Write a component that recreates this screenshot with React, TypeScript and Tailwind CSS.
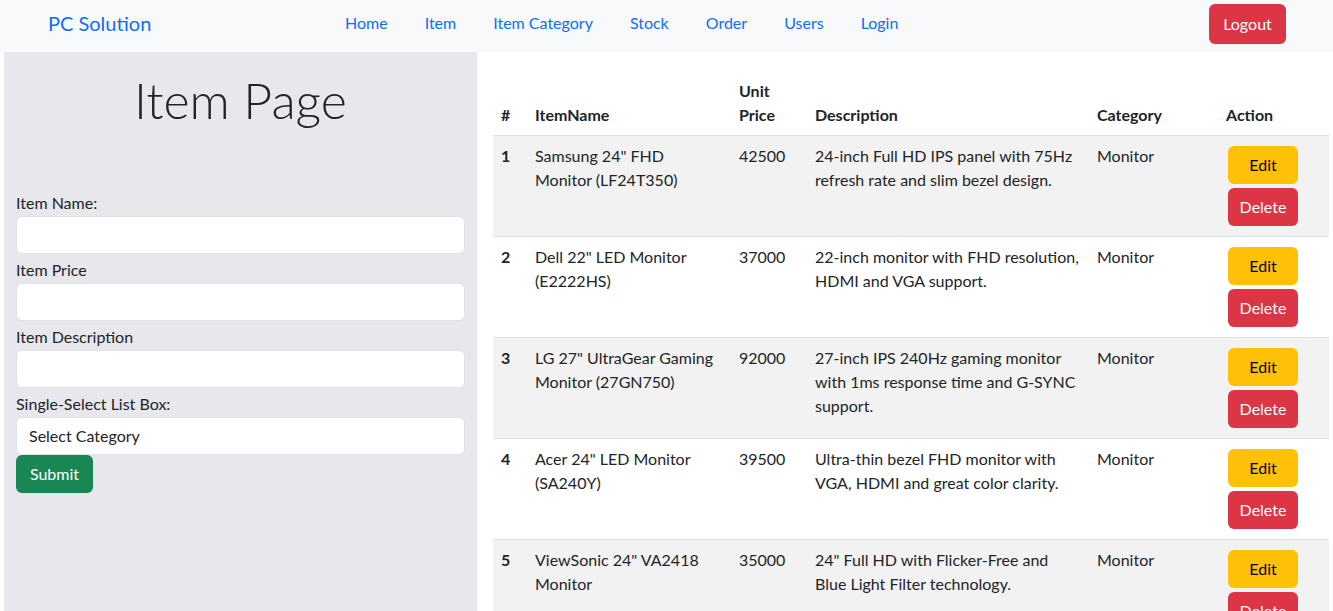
import React from 'react';

type Item = {
    id: number;
    name: string[];
    price: string;
    desc: string[];
    category: string;
};

const items: Item[] = [
    { id: 1, name: ['Samsung 24" FHD', 'Monitor (LF24T350)'], price: '42500', desc: ['24-inch Full HD IPS panel with 75Hz', 'refresh rate and slim bezel design.'], category: 'Monitor' },
    { id: 2, name: ['Dell 22" LED Monitor', '(E2222HS)'], price: '37000', desc: ['22-inch monitor with FHD resolution,', 'HDMI and VGA support.'], category: 'Monitor' },
    { id: 3, name: ['LG 27" UltraGear Gaming', 'Monitor (27GN750)'], price: '92000', desc: ['27-inch IPS 240Hz gaming monitor', 'with 1ms response time and G-SYNC', 'support.'], category: 'Monitor' },
    { id: 4, name: ['Acer 24" LED Monitor', '(SA240Y)'], price: '39500', desc: ['Ultra-thin bezel FHD monitor with', 'VGA, HDMI and great color clarity.'], category: 'Monitor' },
    { id: 5, name: ['ViewSonic 24" VA2418', 'Monitor'], price: '35000', desc: ['24" Full HD with Flicker-Free and', 'Blue Light Filter technology.'], category: 'Monitor' },
];

const navLinks = ['Home', 'Item', 'Item Category', 'Stock', 'Order', 'Users', 'Login'];

const Lines = ({ lines }: { lines: string[] }) => (
    <>
        {lines.map((l, i) => (
            <div key={i} className="whitespace-nowrap">{l}</div>
        ))}
    </>
);

const Field = ({ label, children }: { label: string; children: React.ReactNode }) => (
    <div className="mb-[4px]">
        <label className="block leading-6 text-[#212529]">{label}</label>
        <div className="mt-px">{children}</div>
    </div>
);

export default function App(): React.ReactElement {
    return (
        <div className="min-h-screen bg-white text-[16px] text-[#212529]" style={{ fontFamily: 'Lato, "Noto Sans", sans-serif' }}>
            {/* Navbar */}
            <nav className="h-[52px] bg-[#f8f9fa] flex items-center">
                <a className="w-[345px] shrink-0 pl-12 text-[20px] text-[#0d6efd] leading-none -mt-[6px]">PC Solution</a>
                <ul className="flex gap-[37px] -mt-[6px]">
                    {navLinks.map(l => (
                        <li key={l}><a className="text-[#0d6efd] leading-6">{l}</a></li>
                    ))}
                </ul>
                <button className="ml-auto mr-[47px] -mt-[4px] h-[40px] w-[77px] rounded-md bg-[#dc3545] text-white">Logout</button>
            </nav>

            <div className="flex items-stretch pl-1 pr-1">
                {/* Left form panel */}
                <aside className="w-[473px] shrink-0 bg-[#e8e7ec] px-3 pt-[19px]">
                    <h1 className="h-[58px] leading-[58px] text-center text-[50px] font-light text-[#212529]">Item Page</h1>
                    <form className="mt-[62px]" onSubmit={e => e.preventDefault()}>
                        <Field label="Item Name:">
                            <input className="block w-full h-[38px] rounded-md bg-white border border-[#dee2e6] px-3" />
                        </Field>
                        <Field label="Item Price">
                            <input className="block w-full h-[38px] rounded-md bg-white border border-[#dee2e6] px-3" />
                        </Field>
                        <Field label="Item Description">
                            <input className="block w-full h-[38px] rounded-md bg-white border border-[#dee2e6] px-3" />
                        </Field>
                        <div>
                            <label className="block leading-6">Single-Select List Box:</label>
                            <select className="mt-px block w-full h-[38px] rounded-md bg-white border border-[#dee2e6] px-3 appearance-none text-[#212529]">
                                <option>Select Category</option>
                            </select>
                        </div>
                        <button className="h-[38px] w-[77px] rounded-md bg-[#198754] text-white">Submit</button>
                    </form>
                </aside>

                {/* Table */}
                <main className="flex-1 pl-4 pt-[19px]">
                    <table className="w-[836px] table-fixed border-collapse text-left">
                        <colgroup>
                            <col className="w-[34px]" />
                            <col className="w-[204px]" />
                            <col className="w-[76px]" />
                            <col className="w-[282px]" />
                            <col className="w-[129px]" />
                            <col className="w-[111px]" />
                        </colgroup>
                        <thead>
                            <tr className="border-b border-[#dee2e6]">
                                <th className="p-2 align-bottom font-bold leading-6">#</th>
                                <th className="p-2 align-bottom font-bold leading-6">ItemName</th>
                                <th className="p-2 align-bottom font-bold leading-6">Unit<br />Price</th>
                                <th className="p-2 align-bottom font-bold leading-6">Description</th>
                                <th className="p-2 align-bottom font-bold leading-6">Category</th>
                                <th className="p-2 align-bottom font-bold leading-6">Action</th>
                            </tr>
                        </thead>
                        <tbody>
                            {items.map(it => (
                                <tr key={it.id} className={`border-b border-[#dee2e6] ${it.id % 2 === 1 ? 'bg-[#f2f2f2]' : 'bg-white'}`}>
                                    <td className="p-2 align-top font-bold leading-6">{it.id}</td>
                                    <td className="p-2 align-top leading-6"><Lines lines={it.name} /></td>
                                    <td className="p-2 align-top leading-6">{it.price}</td>
                                    <td className="p-2 align-top leading-6"><Lines lines={it.desc} /></td>
                                    <td className="p-2 align-top leading-6">{it.category}</td>
                                    <td className="p-2 align-top leading-6">
                                        <div className="flex flex-col items-start">
                                            <button className="m-0.5 w-[70px] h-[38px] rounded-md bg-[#ffc107] text-black">Edit</button>
                                            <button className="m-0.5 w-[70px] h-[38px] rounded-md bg-[#dc3545] text-white">Delete</button>
                                        </div>
                                    </td>
                                </tr>
                            ))}
                        </tbody>
                    </table>
                </main>
            </div>
        </div>
    );
}
